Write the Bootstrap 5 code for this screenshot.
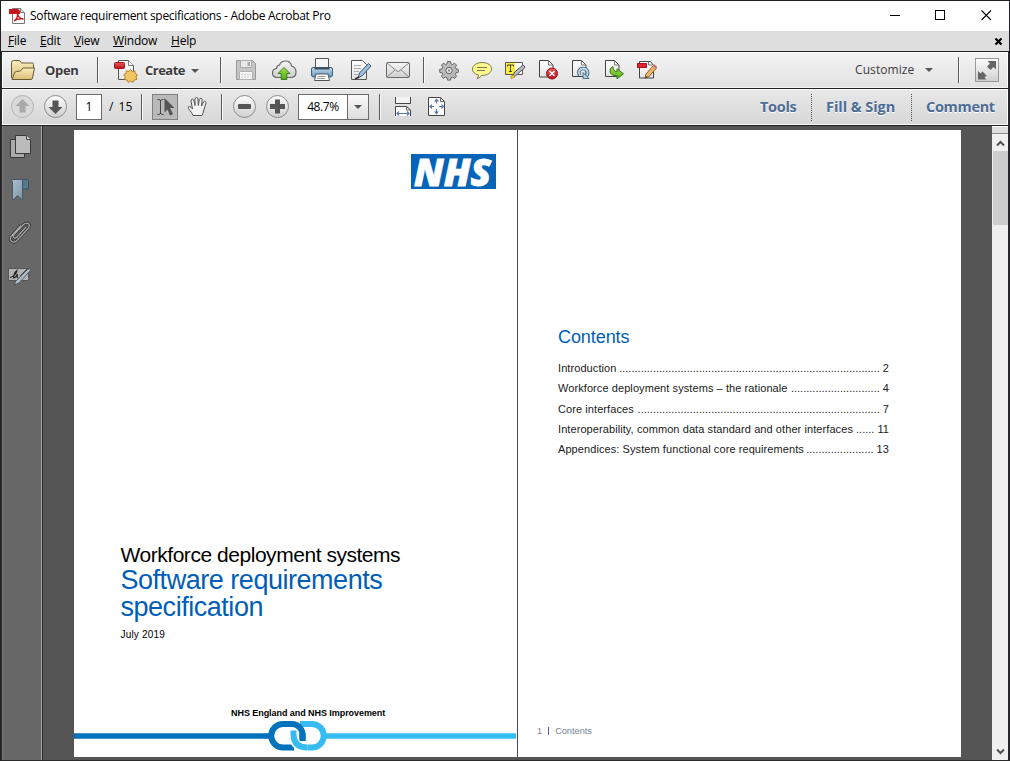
<!DOCTYPE html>
<html lang="en">
<head>
<meta charset="utf-8">
<meta name="viewport" content="width=device-width, initial-scale=1">
<title>Software requirement specifications - Adobe Acrobat Pro</title>
<link href="https://cdn.jsdelivr.net/npm/bootstrap@5.3.0/dist/css/bootstrap.min.css" rel="stylesheet">
<style>
  html, body { height: 100%; }
  body { font: 12px/16px "Open Sans", "Noto Sans", sans-serif; color: #000; overflow: hidden; background: #fff; }
  .window { height: 761px; border: 1px solid #222026; border-bottom-color: #2b2b2b; }
  svg { display: block; flex: none; }
  .t { white-space: nowrap; flex: none; }
  .titlebar { height: 30px; padding-left: 8px; }
  .titlebar .t { letter-spacing: -.31px; margin-left: 5px; }
  .menubar { height: 20px; background: #dedede; padding-left: 7px; padding-right: 6px; }
  .menubar a { color: #000; text-decoration: none; letter-spacing: -.2px; flex: none; }
  .m-file { width: 32px; } .m-edit { width: 34px; } .m-view { width: 39px; } .m-window { width: 58px; } .m-help { width: 40px; }
  .frame { border-left: 1px solid #2a2a2a; border-right: 1px solid #2a2a2a; }
  .bar { height: 37px; border-top: 1px solid #222; color: #3c3c3c; box-shadow: inset 0 1px #fff, inset 1px 0 #fff, inset -1px 0 #fff, inset 0 -1px #f6f6f6; }
  .bar-main { background-color: #ebebeb; background-image: linear-gradient(#f4f4f4, #e2e2e2); }
  .bar-nav { background-color: #dfdfdf; background-image: linear-gradient(#e8e8e8, #d6d6d6); }
  .bar-label { font-weight: 700; font-size: 13px; letter-spacing: -.5px; text-shadow: 0 1px #fff; }
  .vsep { width: 2px; height: 26px; flex: none; background: linear-gradient(90deg, #5a5a5a 50%, #f8f8f8 50%); }
  .dsep { width: 1px; height: 27px; flex: none; background: repeating-linear-gradient(#555 0 1px, transparent 1px 2px); }
  .pagebox { width: 26px; height: 26px; border: 1px solid #6b6b6b; background: #fff; color: #000; text-align: center; line-height: 23px; flex: none; }
  .zoombox { width: 71px; height: 26px; border: 1px solid #6b6b6b; background: #fff; color: #000; flex: none; }
  .zoombox .val { width: 48px; text-align: center; letter-spacing: -.4px; line-height: 23px; }
  .zoombox .drop { width: 21px; border-left: 1px solid #6b6b6b; background: linear-gradient(#fafafa, #dcdcdc); }
  .pane-link { font-weight: 700; font-size: 14.5px; letter-spacing: -.32px; color: #4d6c96; text-decoration: none; text-shadow: 0 1px #fff; flex: none; padding-bottom: 1px; }
  .workspace { height: 635px; border-top: 1px solid #222; background: #555; }
  .rail { width: 41px; background: #676767; border-right: 1px solid #2a2a2a; box-shadow: inset -1px 0 #aaa, inset 1px 0 #777; flex: none; }
  .pages { margin: 4px 0 3px 31px; width: 887px; flex: none; font-family: "Liberation Sans", Arial, sans-serif; }
  .sheet { background: #fff; }
  .sheet-cover { width: 444px; border-right: 1px solid #4b4b4b; flex: none; }
  .logo { margin: 24px 0 0 337px; overflow: visible; }
  .cover-title { margin: 353px 0 0 46.5px; }
  .cover-sub { font-size: 21px; line-height: 25px; letter-spacing: -.46px; margin: 0; font-weight: 400; }
  .cover-head { font-size: 27px; line-height: 27px; letter-spacing: -.47px; color: #005eb8; margin: 0; font-weight: 400; }
  .cover-date { font-size: 10px; line-height: 12px; letter-spacing: .18px; margin-top: 8px; }
  .cover-org { font-size: 9px; line-height: 12px; font-weight: 700; margin: 66px 0 0 157px; letter-spacing: -.06px; }
  .toc-head { font-size: 18px; line-height: 22px; color: #005eb8; font-weight: 400; margin: 196px 0 0 40px; letter-spacing: -.08px; }
  .toc { font-size: 11px; line-height: 20.25px; width: 331px; margin: 10px 0 0 40px; letter-spacing: .08px; color: #1a1a1a; }
  .toc .dots { letter-spacing: .01px; margin-right: 3px; }
  .page-foot { font-size: 9.2px; line-height: 12px; color: #768692; margin: 266px 0 0 19px; }
  .page-foot i { width: 1px; height: 8px; background: #5a50c0; margin: 2px 6px 0 6px; }
  .scroller { width: 16px; background: #f0f0f0; flex: none; }
  .splitter { height: 8px; background: #dedede; border-bottom: 1px solid #8f8f8f; border-top: 1px solid #fff; }
  .thumb { height: 74px; margin-left: 1px; width: 15px; background: #cdcdcd; }
</style>
</head>
<body>
<svg width="0" height="0" class="position-absolute">
  <defs>
    <linearGradient id="gBtn" x2="0" y2="1"><stop stop-color="#fdfdfd"/><stop offset="1" stop-color="#cfcfcf"/></linearGradient>
    <linearGradient id="gDoc" x2="0" y2="1"><stop stop-color="#fff"/><stop offset="1" stop-color="#e4e4e4"/></linearGradient>
    <linearGradient id="gMail" x2="0" y2="1"><stop stop-color="#f6f6f6"/><stop offset="1" stop-color="#cfcfcf"/></linearGradient>
    <linearGradient id="gFold" x2="0" y2="1"><stop stop-color="#fbefc0"/><stop offset="1" stop-color="#dcbb72"/></linearGradient>
    <linearGradient id="gGreen" x2="0" y2="1"><stop stop-color="#a8e04a"/><stop offset="1" stop-color="#4fae1e"/></linearGradient>
    <linearGradient id="gBlue" x2="0" y2="1"><stop stop-color="#c4def0"/><stop offset="1" stop-color="#5f95bd"/></linearGradient>
    <linearGradient id="gRed" x2="0" y2="1"><stop stop-color="#ee5a5a"/><stop offset="1" stop-color="#b80f1c"/></linearGradient>
    <linearGradient id="gMark" x2="1" y2="1"><stop stop-color="#a9c0d0"/><stop offset="1" stop-color="#7e97a8"/></linearGradient>
  </defs>
</svg>
<div class="window">
  <header class="titlebar d-flex align-items-center">
    <svg width="16" height="18" viewBox="9 6 16 18"><path d="M12.500 7.500h8l4 4v11h-12z" fill="#fff" stroke="#777"/><path d="M20.500 7.500v4h4" fill="#ddd" stroke="#777"/><path d="M9 8h9l2 2v3H9z" fill="#c4161c"/><path d="M14 20c3-2 4-5 3.500-8 .5 4 3 6 6 6-4-.5-7 0-9.500 2z" fill="none" stroke="#c4161c" stroke-width="1.300"/></svg>
    <span class="t">Software requirement specifications - Adobe Acrobat Pro</span>
    <svg class="ms-auto" width="122" height="30" viewBox="887 1 122 30" fill="none" stroke="#000" shape-rendering="crispEdges"><path d="M890 15.500h10M935.500 10.500h9v9h-9z"/><path d="M981.500 10.500l9.500 9.500M991 10.500l-9.500 9.500" shape-rendering="auto" stroke-width="1.100"/></svg>
  </header>
  <nav class="menubar d-flex align-items-center">
    <a class="m-file" href="#"><u>F</u>ile</a><a class="m-edit" href="#"><u>E</u>dit</a><a class="m-view" href="#"><u>V</u>iew</a><a class="m-window" href="#"><u>W</u>indow</a><a class="m-help" href="#"><u>H</u>elp</a>
    <svg class="ms-auto" width="9" height="9" viewBox="0 0 9 9"><path d="M1.500 1.500l6 6M7.500 1.500l-6 6" stroke="#000" stroke-width="2.200"/></svg>
  </nav>
  <div class="frame">
    <div class="bar bar-main d-flex align-items-center">
      <svg width="43" height="36" viewBox="2 52 43 36"><path d="M11.500 78V62.500q0-2 2-2h6l2 2.500h11q1 0 1 1.500v4" fill="url(#gFold)" stroke="#6b5a36"/><path d="M12 79.500l2.500-6.500q.5-1.300 2-1.500l4-.5 2.500-3h11.500l-2 10q-.3 1.500-1.500 1.500z" fill="url(#gFold)" stroke="#6b5a36"/></svg>
      <span class="t bar-label" style="width:52px;letter-spacing:-.3px">Open</span>
      <div class="vsep"></div>
      <svg width="46" height="36" viewBox="99 52 46 36"><path d="M118.500 60.500h10l5 5v14h-15z" fill="url(#gDoc)" stroke="#555"/><path d="M128.500 60.500v5h5" fill="#fff" stroke="#777"/><rect x="114.500" y="62.500" width="10" height="6" rx="1" fill="url(#gRed)" stroke="#a3141c"/><path d="M130.500 69.500l1.700 2 2.600-.7.300 2.600 2.300 1.400-1.400 2.200.8 2.500-2.600.5-1.200 2.300-2.500-1-2.400 1-1.200-2.300-2.500-.5.800-2.500-1.500-2.200 2.400-1.400.2-2.600 2.600.7z" fill="#f2c660" stroke="#a97a20" stroke-width=".9"/></svg>
      <span class="t bar-label" style="width:46px">Create</span>
      <svg width="29" height="36" viewBox="191 52 29 36"><path d="M191 69h8l-4 4z" fill="#555"/></svg>
      <div class="vsep"></div>
      <svg width="43" height="36" viewBox="222 52 43 36"><path d="M236.500 60.500h16l3 3v16h-19z" fill="#c6c6c6" stroke="#999"/><path d="M240.500 60.500h11v7h-11z" fill="#e8e8e8" stroke="#aaa"/><path d="M247.500 62v4h2.500v-4z" fill="#aaa"/><path d="M239.500 71.500h13v8h-13z" fill="#f6f6f6" stroke="#b0b0b0"/><path d="M241 74.500h10M241 77h10" stroke="#c8c8c8" stroke-dasharray="2 1"/></svg>
      <svg width="38" height="36" viewBox="265 52 38 36"><path d="M277 77.500q-4.500-.2-4.500-4.500 0-4 4-4.500 0-3 3-3.500 1.500-4 6-4 5 0 6 5 4.500 1.500 4.500 6 0 5.500-5 5.500z" fill="url(#gMail)" stroke="#666" stroke-width="1.200"/><path d="M284 67.500l6 6h-3.200v6h-5.600v-6H278z" fill="url(#gGreen)" stroke="#3b7d1a"/></svg>
      <svg width="38" height="36" viewBox="303 52 38 36"><path d="M315.500 58.500h13v10h-13z" fill="#f4f6f8" stroke="#555"/><path d="M311.500 69q0-1.500 1.500-1.500h18q1.500 0 1.500 1.500v6q0 2-2 2h-17q-2 0-2-2z" fill="url(#gBlue)" stroke="#40627c"/><path d="M314.500 67.500h15v2h-15z" fill="#3e4b55"/><path d="M316 74h12l1.500 6.500h-15z" fill="#fff" stroke="#555"/><path d="M317.500 76.500h8M317 78.500h8" stroke="#999"/></svg>
      <svg width="38" height="36" viewBox="341 52 38 36"><path d="M351.500 60.500h11l4 4v15h-15z" fill="url(#gDoc)" stroke="#555"/><path d="M354 65.500h7M354 68.500h7M354 71.500h5M354 74.500h4" stroke="#aaa"/><path d="M358 78l1.500-5 9-9.500 2.500 2.500-8.500 9.500z" fill="#9fc0dc" stroke="#385673"/><path d="M355 79l4-2" stroke="#333" stroke-width="1.500"/></svg>
      <svg width="44" height="36" viewBox="379 52 44 36"><rect x="386.500" y="62.500" width="23" height="15" rx="1" fill="url(#gMail)" stroke="#666"/><path d="M387 63l11 9 11-9M387 77l8-7M409 77l-8-7" fill="none" stroke="#888"/></svg>
      <div class="vsep"></div>
      <svg width="40" height="36" viewBox="425 52 40 36"><path d="M447.500 61.500h3l.5 2.300 1.600.7 2-1.300 2 2-1.300 2 .7 1.600 2.300.5v3l-2.300.5-.7 1.600 1.300 2-2 2-2-1.300-1.600.7-.5 2.300h-3l-.5-2.300-1.600-.7-2 1.300-2-2 1.300-2-.7-1.600-2.300-.5v-3l2.300-.5.700-1.600-1.300-2 2-2 2 1.300 1.600-.7z" fill="#b9b9b9" stroke="#666"/><circle cx="449" cy="70.500" r="3.200" fill="#e0e0e0" stroke="#666"/><circle cx="449" cy="70.500" r="1" fill="#777"/></svg>
      <svg width="33" height="36" viewBox="465 52 33 36"><path d="M482 62.500c6 0 9.500 3 9.500 6.500s-4 6.500-10 6.500q-1 2.500-4.500 3 1.500-1.500 1.500-3.500c-4-.8-6-3-6-6 0-3.500 4-6.500 9.500-6.500z" fill="#fff98c" stroke="#7d7a50"/><path d="M477 67.500h10M477 70.500h8" stroke="#77755a"/></svg>
      <svg width="33" height="36" viewBox="498 52 33 36"><path d="M505.500 62.500h17v12h-17z" fill="#fff" stroke="#555"/><path d="M506 63h9v11h-9z" fill="#ffed3c"/><path d="M507.500 66.500v-1.500h6v1.500M510.500 65v6M509 71.500h3" fill="none" stroke="#444"/><path d="M513 76l1.500-4 8-6.500q2-.5 2.500 2l-7.500 6.500-2.500 2.500z" fill="#bbb" stroke="#555"/><path d="M511 76l3-1 1 2-4 1.500z" fill="#f0d820" stroke="#8a7a20" stroke-width=".6"/></svg>
      <svg width="33" height="36" viewBox="531 52 33 36"><path d="M539.500 60.500h9l4.500 4.500v12h-13.500z" fill="url(#gDoc)" stroke="#444"/><path d="M548.500 60.500v4.500h4.500" fill="none" stroke="#777"/><circle cx="552" cy="73.500" r="5.500" fill="url(#gRed)" stroke="#98121a"/><path d="M549.500 71l5 5M554.500 71l-5 5" stroke="#fff" stroke-width="1.600"/></svg>
      <svg width="33" height="36" viewBox="564 52 33 36"><path d="M572.500 60.500h9l4.500 4.500v11.500h-13.500z" fill="url(#gDoc)" stroke="#444"/><path d="M581.500 60.500v4.500h4.500" fill="none" stroke="#777"/><path d="M580 75.500c-2.500-3.500-.5-7 3-7 4.500 0 6 5 3 7.500" fill="none" stroke="#41637f" stroke-width="3.600"/><path d="M580 75.500c-2.500-3.500-.5-7 3-7 4.500 0 6 5 3 7.500" fill="none" stroke="#c3dced" stroke-width="1.800"/><path d="M583 72.500v6h6z" fill="#b9d4e8" stroke="#41637f" stroke-width=".9"/></svg>
      <svg width="33" height="36" viewBox="597 52 33 36"><path d="M605.500 60.500h9l4.500 4.500v11.500h-13.500z" fill="url(#gDoc)" stroke="#444"/><path d="M614.500 60.500v4.500h4.500" fill="none" stroke="#777"/><path d="M613 66.500q-3 1-3 4.500 0 4.500 7 4.800v3l6.500-5-6.500-5v3q-4-.3-4-5.300z" fill="url(#gGreen)" stroke="#35731a"/></svg>
      <svg width="33" height="36" viewBox="630 52 33 36"><path d="M639.500 61.500h11l3 4v12.500h-14z" fill="url(#gDoc)" stroke="#444"/><path d="M648.500 61.500v3.500h4" fill="none" stroke="#777"/><path d="M637.500 63.500h9v4h-9z" fill="#e0222c" stroke="#a80f18"/><path d="M645 78l1-4 7.500-8.500 3 2.500-7.500 8.500z" fill="#efb56a" stroke="#8a5a2a"/><path d="M653.500 65l3 2.500" stroke="#c66" stroke-width="2"/><path d="M645 78.500l1-2.500 1.500 1z" fill="#333"/></svg>
      <span class="t ms-auto" style="width:70px;letter-spacing:.08px">Customize</span>
      <svg width="33" height="36" viewBox="925 52 33 36"><path d="M925 68h8l-4 4z" fill="#555"/></svg>
      <div class="vsep"></div>
      <svg width="48" height="36" viewBox="960 52 48 36"><rect x="975.500" y="58.500" width="23" height="23" fill="url(#gBtn)" stroke="#999"/><path d="M987.500 61h8.500v8.500l-2.500-2.500-3 3-3.500-3.500 3-3zM978 71l2.500 2.500 2-2 4 4-2 2 2 2H978z" fill="#666"/></svg>
    </div>
    <div class="bar bar-nav d-flex align-items-center">
      <svg width="37" height="36" viewBox="2 89 37 36"><circle cx="22.500" cy="106.500" r="11" fill="#dadada" stroke="#b4b4b4"/><path d="M22.500 99l7 7h-4v6.500h-6V106h-4z" fill="#a9a9a9"/></svg>
      <svg width="37" height="36" viewBox="39 89 37 36"><circle cx="55.500" cy="106.500" r="11" fill="url(#gBtn)" stroke="#8c8c8c"/><path d="M55.500 114l7-7h-4v-6.500h-6v6.500h-4z" fill="#555"/></svg>
      <div class="pagebox">1</div>
      <span class="t text-black" style="width:39px;padding-left:7px;word-spacing:2px">/ 15</span>
      <div class="vsep"></div>
      <svg width="37" height="36" viewBox="143 89 37 36"><rect x="152.500" y="94.500" width="25" height="25" fill="#b9b9b9" stroke="#808080"/><path d="M157.500 99.500h1.500l1.500 1 1.500-1h1.500M160.500 100v14M157.500 114.500h1.500l1.500-1 1.500 1h1.500" fill="none" stroke="#444"/><path d="M164.500 98l10 10h-4.500l3 6-3 1.500-2.500-6-3 3z" fill="#555"/></svg>
      <svg width="41" height="36" viewBox="180 89 41 36"><path d="M193 115.500q-1-3-4.500-7-.8-2 1-2.200 1.500.5 3 2.700l-1.500-8q0-1.800 1.300-1.800t1.700 1.800l1 4.500V99q.2-1.500 1.500-1.500T198 99l.3 6.500 1-6q.5-1.500 1.700-1.200 1.300.3 1.100 1.700l-.6 6 2-4q.8-1.200 1.800-.6t.6 2l-2.400 7.600q-.5 2.500-1.500 4.500z" fill="#f2f2f2" stroke="#555"/></svg>
      <div class="vsep"></div>
      <svg width="38" height="36" viewBox="223 89 38 36"><circle cx="244.500" cy="106.500" r="11" fill="url(#gBtn)" stroke="#8c8c8c"/><rect x="238" y="104" width="13" height="5" rx="1" fill="#555"/></svg>
      <svg width="37" height="36" viewBox="261 89 37 36"><circle cx="277.500" cy="106.500" r="11" fill="url(#gBtn)" stroke="#8c8c8c"/><path d="M275 99.500h5v4.500h5v5h-5v4.500h-5V109h-5v-5h5z" fill="#555"/></svg>
      <div class="zoombox d-flex"><div class="val">48.7%</div><div class="drop d-flex align-items-center justify-content-center"><svg width="8" height="4"><path d="M0 0h8L4 4z" fill="#555"/></svg></div></div>
      <div style="width:10px" class="flex-shrink-0"></div>
      <div class="vsep"></div>
      <svg width="38" height="36" viewBox="381 89 38 36"><path d="M395.500 97v6.500h15V97" fill="#f4f4f4" stroke="#444"/><path d="M395.500 116v-9.500h11l4 3.500v6" fill="#fff" stroke="#444"/><path d="M406.500 106.500v3.500h4" fill="none" stroke="#666"/><path d="M397 113.500h12M399 111.500l-2 2 2 2M407 111.500l2 2-2 2" fill="none" stroke="#5d76b5" stroke-width="1.200"/></svg>
      <svg width="33" height="36" viewBox="419 89 33 36"><path d="M428.500 97.500h12l4 4v14h-16z" fill="#fff" stroke="#444"/><path d="M440.500 97.500v4h4" fill="none" stroke="#666"/><path d="M436.500 99v4.500M436.500 109v5M430 106.500h4M439 106.500h4.500" stroke="#5d76b5" stroke-width="1.200"/><path d="M434 101.500l2.500-3 2.500 3zM434 111.500l2.500 3 2.500-3zM432 104l-3 2.500 3 2.500zM441.500 104l3 2.500-3 2.500z" fill="#5d76b5"/></svg>
      <a class="pane-link ms-auto" style="width:51px" href="#">Tools</a>
      <div class="dsep"></div>
      <a class="pane-link" style="width:99px;padding-left:14px;letter-spacing:-.05px" href="#">Fill &amp; Sign</a>
      <div class="dsep"></div>
      <a class="pane-link" style="width:96px;padding-left:14px" href="#">Comment</a>
    </div>
    <div class="workspace d-flex">
      <aside class="rail">
        <svg width="39" height="42" viewBox="2 126 39 42"><path d="M10.500 139.500h14v18h-14z" fill="#aaa" stroke="#3a3a3a"/><path d="M15.500 135.500h11l4 4v14h-15z" fill="#bbb" stroke="#3a3a3a"/><path d="M26.500 135.500v4h4" fill="#ddd" stroke="#444"/></svg>
        <svg width="39" height="43" viewBox="2 168 39 43"><path d="M20.500 179.500h7q1 .5 1 2v7.500h-6v-7z" fill="#54788c" stroke="#3c515f"/><path d="M11.500 181q0-1.500 1.500-1.500h9.500v20.500l-5-4.500-5 5v-19z" fill="url(#gMark)" stroke="#455863"/></svg>
        <svg width="39" height="43" viewBox="2 211 39 43"><g fill="none" stroke-linecap="round"><path d="M26 227l-9 10q-2 2-3.300.7t.3-3.200l9.500-10q3-2.500 5-.8 2 2-.5 4.800l-11 12q-3 3-5.500.8t0-5.300l9-10" stroke="#343434" stroke-width="2.800"/><path d="M26 227l-9 10q-2 2-3.300.7t.3-3.200l9.500-10q3-2.500 5-.8 2 2-.5 4.800l-11 12q-3 3-5.500.8t0-5.300l9-10" stroke="#aaa" stroke-width="1.200"/></g></svg>
        <svg width="39" height="43" viewBox="2 254 39 43"><path d="M8.500 268.500h20v12h-20z" fill="#b4b4b4" stroke="#555"/><path d="M10 277.500q6-2 7-7-3 2-3.500 7.500 2 0 4-4-1 4 1 4" fill="none" stroke="#222" stroke-width="1.200"/><path d="M20 276l7-7" stroke="#444"/><path d="M14.500 285l1-3.500 12-12q2-1.500 3.500.3L19 283z" fill="#a9bccb" stroke="#444" stroke-width=".8"/></svg>
      </aside>
      <main class="pages d-flex">
        <section class="sheet sheet-cover">
          <svg class="logo" width="85" height="35" viewBox="0 0 85 35"><path d="M0 0h85v35H0z" fill="#0664b8"/><text x="3" y="31.500" font-family="Open Sans, Noto Sans, sans-serif" font-weight="800" font-style="italic" font-size="37.500" fill="#fff" stroke="#fff" stroke-width=".8" textLength="77" lengthAdjust="spacingAndGlyphs">NHS</text></svg>
          <div class="cover-title">
            <h2 class="cover-sub">Workforce deployment systems</h2>
            <h1 class="cover-head">Software requirements<br>specification</h1>
            <div class="cover-date">July 2019</div>
          </div>
          <div class="cover-org">NHS England and NHS Improvement</div>
          <svg width="443" height="32" viewBox="74 719 443 32"><path d="M74 736h197" stroke="#0072bc" stroke-width="5.500"/><path d="M325 736h191" stroke="#36bcf0" stroke-width="5.500"/><g fill="none" stroke-width="6"><path d="M300 724h12a11.500 11.500 0 0 1 0 23.500h-6" stroke="#36bcf0"/><path d="M294 747.500h-11a11.700 11.700 0 0 1 0-23.500h9a10.500 10.500 0 0 1 10.500 10.500v6" stroke="#0072bc"/><path d="M293.500 730.500v4.500q.5 12.500 14 12.500" stroke="#fff" stroke-width="9"/><path d="M293.500 730.500v4.500q.5 12.500 14 12.500" stroke="#36bcf0"/><path d="M302.500 733v8" stroke="#0072bc"/></g></svg>
        </section>
        <section class="sheet flex-fill">
          <h2 class="toc-head">Contents</h2>
          <div class="toc">
            <div class="d-flex"><span class="t">Introduction</span><span class="t dots ms-auto">.....................................................................................</span><span class="t">2</span></div>
            <div class="d-flex"><span class="t">Workforce deployment systems – the rationale</span><span class="t dots ms-auto">.............................</span><span class="t">4</span></div>
            <div class="d-flex"><span class="t">Core interfaces</span><span class="t dots ms-auto">...............................................................................</span><span class="t">7</span></div>
            <div class="d-flex"><span class="t">Interoperability, common data standard and other interfaces</span><span class="t dots ms-auto">......</span><span class="t">11</span></div>
            <div class="d-flex"><span class="t">Appendices: System functional core requirements</span><span class="t dots ms-auto">......................</span><span class="t">13</span></div>
          </div>
          <div class="page-foot d-flex"><span>1</span><i></i><span>Contents</span></div>
        </section>
      </main>
      <div class="scroller ms-auto">
        <div class="splitter"></div>
        <svg width="16" height="17" viewBox="992 134 16 17"><path d="M997 145.500l3.500-3.500 3.500 3.500" fill="none" stroke="#505050" stroke-width="2"/></svg>
        <div class="thumb"></div>
        <svg width="16" height="534" viewBox="992 225 16 534"><path d="M997 749.500l3.500 3.500 3.500-3.500" fill="none" stroke="#505050" stroke-width="2"/></svg>
      </div>
    </div>
  </div>
</div>
<script src="https://cdn.jsdelivr.net/npm/bootstrap@5.3.0/dist/js/bootstrap.bundle.min.js"></script>
</body>
</html>
